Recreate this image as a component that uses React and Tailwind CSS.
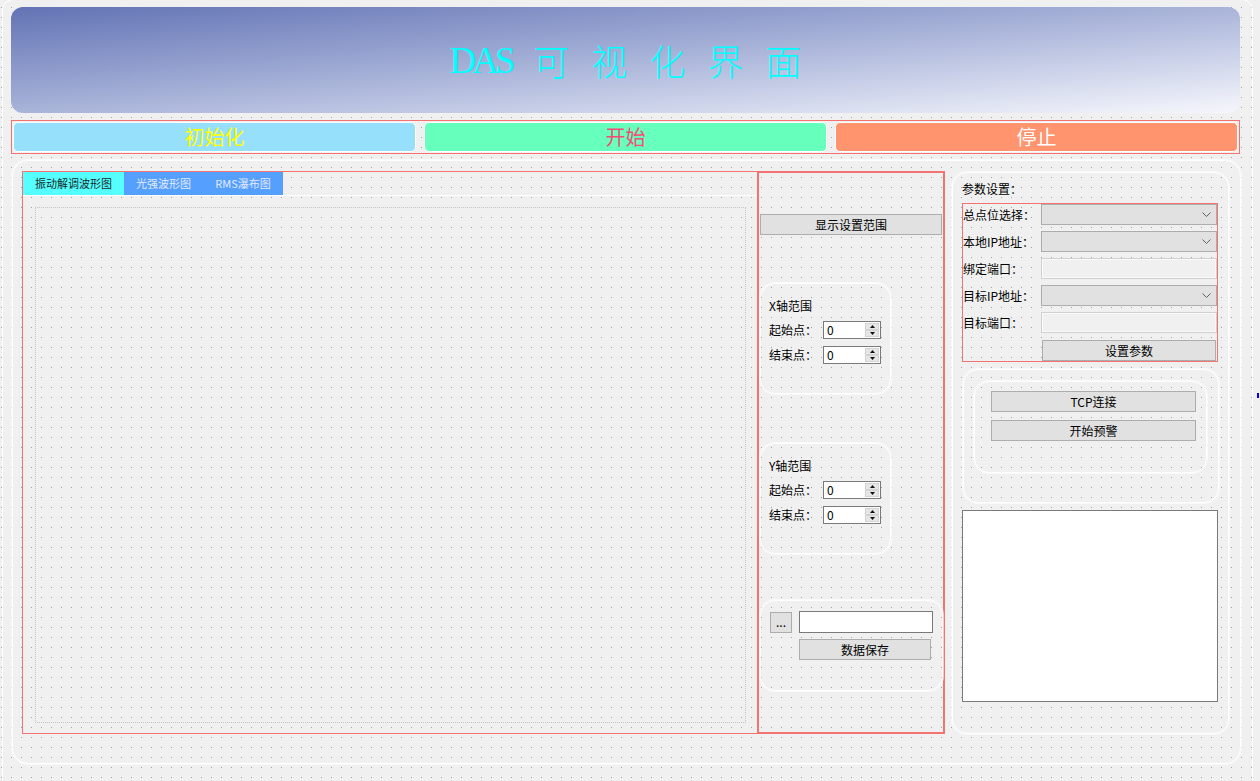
import React from 'react';

const Btn = ({ children, className = '' }) => (
  <div
    className={`h-[21px] flex items-center justify-center bg-[#e1e1e1] border border-[#adadad] text-[12px] leading-none text-black ${className}`}
  >
    {children}
  </div>
);

const Arrow = ({ up }) => (
  <div className="flex-1 bg-[#e6e6e6] border border-[#d4d4d4] flex items-center justify-center">
    <svg width="5" height="3" viewBox="0 0 5 3">
      <path d={up ? 'M0 3L2.5 0L5 3Z' : 'M0 0L2.5 3L5 0Z'} fill="#111" />
    </svg>
  </div>
);

const SpinBox = () => (
  <div className="w-[58px] h-[18px] bg-white border border-[#7a7a7a] flex items-center">
    <span className="flex-1 pl-[3px] text-[12px] leading-none text-black">0</span>
    <div className="w-[15px] h-full flex flex-col py-[1px] pr-[1px]">
      <Arrow up />
      <Arrow />
    </div>
  </div>
);

const Combo = () => (
  <div className="w-[176px] h-[21px] bg-[#e1e1e1] border border-[#adadad] flex items-center justify-end pr-[5px]">
    <svg width="9" height="5" viewBox="0 0 9 5">
      <path d="M0.5 0.5L4.5 4.5L8.5 0.5" fill="none" stroke="#606060" strokeWidth="1" />
    </svg>
  </div>
);

const LineEdit = () => (
  <div className="w-[176px] h-[21px] bg-[#f0f0f0] border border-[#d0d0d0] shadow-[inset_0_0_0_1px_#fafafa]" />
);

const RangeGroup = ({ title }) => (
  <div className="ml-[1px] w-[131px] h-[111px] rounded-[15px] border border-white shadow-[0_0_0_1px_rgba(255,255,255,0.6)] pt-[14px] pl-[8px] text-[12px] text-black">
    <div className="leading-[16px]">{title}</div>
    <div className="mt-[6px] flex items-center h-[19px]">
      <span className="w-[54px] leading-none">起始点：</span>
      <SpinBox />
    </div>
    <div className="mt-[6px] flex items-center h-[19px]">
      <span className="w-[54px] leading-none">结束点：</span>
      <SpinBox />
    </div>
  </div>
);

const FormRow = ({ label, children }) => (
  <div className="flex items-center h-[21px]">
    <span className="w-[78px] text-[12px] leading-none text-black">{label}</span>
    {children}
  </div>
);

const App = () => {
  const chars = ['可', '视', '化', '界', '面'];
  return (
    <div className="relative w-[1260px] h-[781px] overflow-hidden bg-[#f0f0f0] bg-[image:conic-gradient(from_270deg_at_1px_1px,#a0a0a0_25%,transparent_0)] bg-[length:10px_10px] bg-[position:1px_7px] font-['Noto_Sans_CJK_SC',sans-serif]">
      <div className="-mt-[1px] ml-[2px] w-[1251px] h-[800px] rounded-[11px] border border-white">
        {/* header */}
        <div className="mt-[7px] ml-[8px] w-[1229px] h-[106px] rounded-[12px] bg-linear-to-br from-[#6373b4] to-[#f6f7fc] flex items-center justify-center gap-[22px] text-[#00ffff] text-[36px] leading-none">
          <span className="[font-family:'Liberation_Serif',serif] text-[37px] tracking-[-4px]">DAS</span>
          {chars.map((c) => (
            <span key={c} className="font-light">{c}</span>
          ))}
        </div>

        {/* action buttons */}
        <div className="mt-[7px] ml-[8px] w-[1229px] h-[34px] border border-[#f37373] flex items-center gap-[8px] px-[1px]">
          <div className="flex-1 h-[30px] rounded-[5px] border border-white bg-[#96e0fb] flex items-center justify-center text-[20px] leading-none text-[#ffff00]">
            初始化
          </div>
          <div className="flex-1 h-[30px] rounded-[5px] border border-white bg-[#66ffbb] flex items-center justify-center text-[20px] leading-none text-[#f24d78]">
            开始
          </div>
          <div className="flex-1 h-[30px] rounded-[5px] border border-white bg-[#ff946e] flex items-center justify-center text-[20px] leading-none text-white">
            停止
          </div>
        </div>

        {/* main group */}
        <div className="mt-[6px] ml-[9px] w-[1229px] h-[604px] rounded-[16px] border border-white shadow-[0_0_0_1px_rgba(255,255,255,0.6)] pt-[10px] pl-[9px] flex">
          {/* tab widget */}
          <div className="w-[735px] h-[563px] border-l border-t border-b border-[#f37373] flex flex-col">
            <div className="flex h-[23px] text-[11px] leading-none">
              <div className="w-[101px] bg-[#55ffff] text-[#1a2a2a] flex items-center justify-center">振动解调波形图</div>
              <div className="w-[79px] bg-[#55a0ff] text-[#e4eaff] flex items-center justify-center">光强波形图</div>
              <div className="w-[80px] bg-[#55a0ff] text-[#e4eaff] flex items-center justify-center">RMS瀑布图</div>
            </div>
            <div className="flex-1 border-t border-white">
              <div className="mt-[11px] ml-[12px] w-[711px] h-[516px] border border-dotted border-[#c4c4c4]" />
            </div>
          </div>

          {/* middle column */}
          <div className="w-[188px] h-[563px] border-2 border-[#f37373] flex flex-col">
            <Btn className="mt-[41px] ml-[1px] w-[182px]">显示设置范围</Btn>
            <div className="mt-[48px]">
              <RangeGroup title="X轴范围" />
            </div>
            <div className="mt-[49px]">
              <RangeGroup title="Y轴范围" />
            </div>
            <div className="mt-[46px] ml-[1px] w-[183px] h-[91px] rounded-[15px] border border-white shadow-[0_0_0_1px_rgba(255,255,255,0.6)] pt-[10px] pl-[9px]">
              <div className="flex items-center">
                <Btn className="w-[22px] h-[19px]">...</Btn>
                <div className="ml-[7px] w-[134px] h-[22px] bg-white border border-[#7a7a7a]" />
              </div>
              <Btn className="mt-[6px] ml-[29px] w-[132px]">数据保存</Btn>
            </div>
          </div>

          {/* right column */}
          <div className="ml-[7px] mt-[1px] w-[277px] h-[562px] rounded-[15px] border border-white shadow-[0_0_0_1px_rgba(255,255,255,0.6)] pt-[8px] pl-[9px]">
            <div className="text-[12px] leading-[16px] text-black">参数设置：</div>
            <div className="mt-[6px] w-[256px] border border-[#f37373] flex flex-col">
              <div className="flex flex-col gap-[6px]">
                <FormRow label="总点位选择：">
                  <Combo />
                </FormRow>
                <FormRow label="本地IP地址：">
                  <Combo />
                </FormRow>
                <FormRow label="绑定端口：">
                  <LineEdit />
                </FormRow>
                <FormRow label="目标IP地址：">
                  <Combo />
                </FormRow>
                <FormRow label="目标端口：">
                  <LineEdit />
                </FormRow>
              </div>
              <Btn className="mt-[7px] ml-[79px] w-[174px]">设置参数</Btn>
            </div>

            <div className="mt-[7px] ml-[1px] w-[256px] h-[134px] rounded-[15px] border border-white shadow-[0_0_0_1px_rgba(255,255,255,0.6)] pt-[11px] pl-[10px]">
              <div className="w-[233px] h-[92px] rounded-[15px] border border-white shadow-[0_0_0_1px_rgba(255,255,255,0.6)] pt-[9px] pl-[16px] flex flex-col gap-[8px]">
                <Btn className="w-[205px]">TCP连接</Btn>
                <Btn className="w-[205px]">开始预警</Btn>
              </div>
            </div>

            <div className="mt-[7px] w-[256px] h-[192px] bg-white border border-[#7a7a7a]" />
          </div>
        </div>
      </div>

      <div className="absolute left-[1257px] top-[393px] w-[2px] h-[5px] bg-[#0000ff]" />
    </div>
  );
};

export default App;
